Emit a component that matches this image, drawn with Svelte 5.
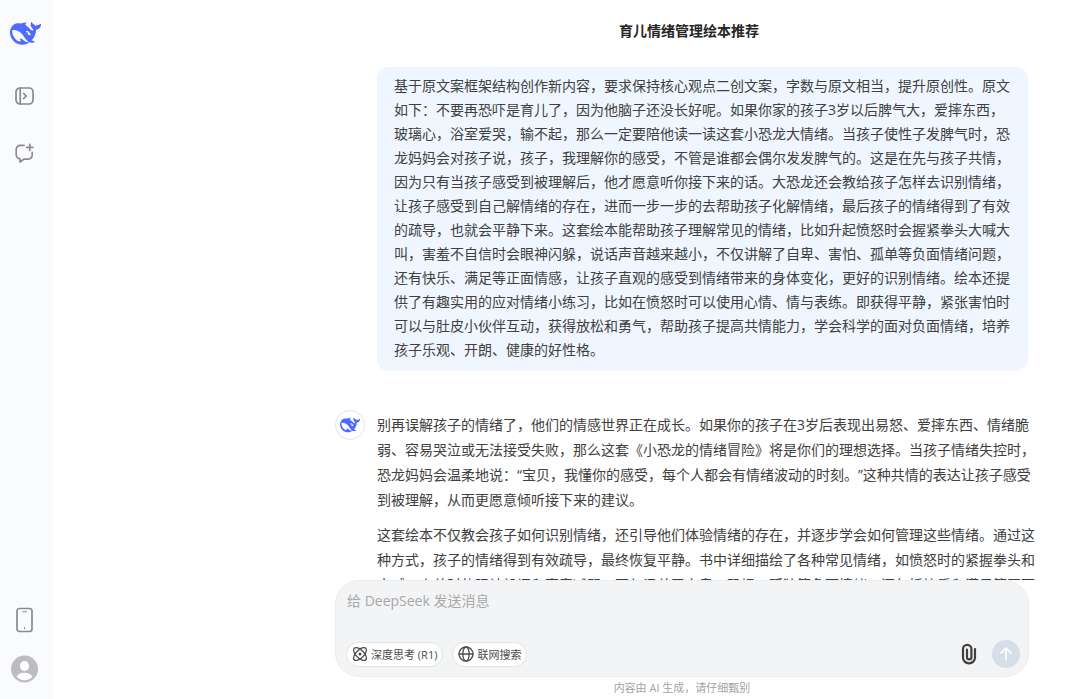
<script>
  const title = '育儿情绪管理绘本推荐';

  const question =
    '基于原文案框架结构创作新内容，要求保持核心观点二创文案，字数与原文相当，提升原创性。原文如下：不要再恐吓是育儿了，因为他脑子还没长好呢。如果你家的孩子3岁以后脾气大，爱摔东西，玻璃心，浴室爱哭，输不起，那么一定要陪他读一读这套小恐龙大情绪。当孩子使性子发脾气时，恐龙妈妈会对孩子说，孩子，我理解你的感受，不管是谁都会偶尔发发脾气的。这是在先与孩子共情，因为只有当孩子感受到被理解后，他才愿意听你接下来的话。大恐龙还会教给孩子怎样去识别情绪，让孩子感受到自己解情绪的存在，进而一步一步的去帮助孩子化解情绪，最后孩子的情绪得到了有效的疏导，也就会平静下来。这套绘本能帮助孩子理解常见的情绪，比如升起愤怒时会握紧拳头大喊大叫，害羞不自信时会眼神闪躲，说话声音越来越小，不仅讲解了自卑、害怕、孤单等负面情绪问题，还有快乐、满足等正面情感，让孩子直观的感受到情绪带来的身体变化，更好的识别情绪。绘本还提供了有趣实用的应对情绪小练习，比如在愤怒时可以使用心情、情与表练。即获得平静，紧张害怕时可以与肚皮小伙伴互动，获得放松和勇气，帮助孩子提高共情能力，学会科学的面对负面情绪，培养孩子乐观、开朗、健康的好性格。';

  const answer = [
    '别再误解孩子的情绪了，他们的情感世界正在成长。如果你的孩子在3岁后表现出易怒、爱摔东西、情绪脆弱、容易哭泣或无法接受失败，那么这套《小恐龙的情绪冒险》将是你们的理想选择。当孩子情绪失控时，恐龙妈妈会温柔地说：“宝贝，我懂你的感受，每个人都会有情绪波动的时刻。”这种共情的表达让孩子感受到被理解，从而更愿意倾听接下来的建议。',
    '这套绘本不仅教会孩子如何识别情绪，还引导他们体验情绪的存在，并逐步学会如何管理这些情绪。通过这种方式，孩子的情绪得到有效疏导，最终恢复平静。书中详细描绘了各种常见情绪，如愤怒时的紧握拳头和大喊、害羞时的眼神躲闪和声音减弱。不仅涵盖了自卑、恐惧、孤独等负面情绪，还包括快乐和满足等正面'
  ];

  let message = $state('');
  let deepThink = $state(false);
  let webSearch = $state(false);
</script>

{#snippet whale()}
  <svg class="whale" viewBox="0 0 24 24" aria-hidden="true">
    <path
      fill="currentColor"
      d="M23.748 4.482c-.254-.124-.364.113-.512.234-.051.039-.094.09-.137.136-.372.397-.806.657-1.373.626-.829-.046-1.537.214-2.163.848-.133-.782-.575-1.248-1.247-1.548-.352-.156-.708-.311-.955-.65-.172-.241-.219-.51-.305-.774-.055-.16-.11-.323-.293-.35-.2-.031-.278.136-.356.276-.313.572-.434 1.202-.422 1.84.027 1.436.633 2.58 1.838 3.393.137.093.172.187.129.323-.082.28-.18.552-.266.833-.055.179-.137.217-.329.14a5.526 5.526 0 01-1.736-1.18c-.857-.828-1.631-1.742-2.597-2.458a11.365 11.365 0 00-.689-.471c-.985-.957.13-1.743.388-1.836.27-.098.093-.432-.779-.428-.872.004-1.67.295-2.687.684a3.055 3.055 0 01-.465.137 9.597 9.597 0 00-2.883-.102c-1.885.21-3.39 1.102-4.497 2.623C.082 8.606-.231 10.684.152 12.85c.403 2.284 1.569 4.175 3.36 5.653 1.858 1.533 3.997 2.284 6.438 2.14 1.482-.085 3.133-.284 4.994-1.86.47.234.962.327 1.78.397.63.059 1.236-.03 1.705-.128.735-.156.684-.837.419-.961-2.155-1.004-1.682-.595-2.113-.926 1.096-1.296 2.746-2.642 3.392-7.003.05-.347.007-.565 0-.845-.004-.17.035-.237.23-.256a4.173 4.173 0 001.545-.475c1.396-.763 1.96-2.015 2.093-3.517.02-.23-.004-.467-.247-.588zM11.581 18c-2.089-1.642-3.102-2.183-3.52-2.16-.392.024-.321.471-.235.763.09.288.207.486.371.739.114.167.192.416-.113.603-.673.416-1.842-.14-1.897-.167-1.361-.802-2.5-1.86-3.301-3.307-.774-1.393-1.224-2.887-1.298-4.482-.02-.386.093-.522.477-.592a4.696 4.696 0 011.529-.039c2.132.312 3.946 1.265 5.468 2.774.868.86 1.525 1.887 2.202 2.891.72 1.066 1.494 2.082 2.48 2.914.348.292.625.514.891.677-.802.09-2.14.11-3.054-.614zm1-6.44a.306.306 0 01.415-.287.302.302 0 01.2.288.306.306 0 01-.31.307.303.303 0 01-.304-.308zm3.11 1.596c-.2.081-.399.151-.59.16a1.245 1.245 0 01-.798-.254c-.274-.23-.47-.358-.552-.758a1.73 1.73 0 01.016-.588c.07-.327-.008-.537-.239-.727-.187-.156-.426-.199-.688-.199a.559.559 0 01-.254-.078c-.11-.054-.2-.19-.114-.358.028-.054.16-.186.192-.21.356-.202.767-.136 1.146.016.352.144.618.408 1.001.782.391.451.462.576.685.914.176.265.336.537.445.848.067.195-.019.354-.25.452z"
    />
  </svg>
{/snippet}

<div class="app">
  <nav class="sidebar">
    <a class="logo" href="#home" aria-label="DeepSeek">{@render whale()}</a>

    <button class="nav-btn" aria-label="打开边栏">
      <svg width="20" height="20" viewBox="0 0 20 20">
        <rect x="1" y="2" width="17" height="16" rx="4" />
        <path d="M5.2 2v16M8.6 7.4l2.600 2.600L8.600 12.600" />
      </svg>
    </button>

    <button class="nav-btn" aria-label="开启新对话">
      <svg width="20" height="20" viewBox="0 0 20 20">
        <path d="M9 2.400H5.200A4 4 0 0 0 1.200 6.400v5.400A4 4 0 0 0 5 15.800V19L8.800 16.200h4.200A4.200 4.200 0 0 0 17.200 12V9.400" />
        <path d="M14.800 1.400v6M11.800 4.400h6" />
      </svg>
    </button>

    <div class="sidebar-bottom">
      <button class="nav-btn" aria-label="下载 App">
        <svg width="18" height="26" viewBox="0 0 18 26">
          <rect x="1" y="1.500" width="15" height="23" rx="2.500" />
          <path class="thin" d="M6.800 4.800h3.600M8.500 20.500v1.200" />
        </svg>
      </button>
      <button class="nav-btn" aria-label="个人信息">
        <svg class="user" width="28" height="28" viewBox="0 0 28 28">
          <circle cx="13.500" cy="14" r="13.500" fill="#bcbcc2" />
          <ellipse cx="13.500" cy="11" rx="4.600" ry="5" fill="#fff" />
          <path d="M5.700 22c1-3 4-4.200 7.800-4.200s6.800 1.200 7.800 4.200c-2 2-4.600 3.200-7.800 3.200S7.700 24 5.700 22z" fill="#fff" />
        </svg>
      </button>
    </div>
  </nav>

  <main>
    <header>
      <h1>{title}</h1>
    </header>

    <section class="messages">
      <div class="question">{question}</div>

      <article class="answer">
        <div class="avatar">{@render whale()}</div>
        <div class="answer-text">
          {#each answer as paragraph}
            <p>{paragraph}</p>
          {/each}
        </div>
      </article>
    </section>

    <form class="composer" onsubmit={(e) => e.preventDefault()}>
      <textarea bind:value={message} aria-label="消息" placeholder="给 DeepSeek 发送消息"></textarea>

      <div class="tools">
        <button type="button" class="pill" aria-pressed={deepThink} onclick={() => (deepThink = !deepThink)}>
          <svg width="16" height="16" viewBox="0 0 16 16">
            <ellipse cx="8" cy="8" rx="8.200" ry="4" transform="rotate(45 8 8)" />
            <ellipse cx="8" cy="8" rx="8.200" ry="4" transform="rotate(-45 8 8)" />
            <circle class="dot" cx="8" cy="8" r="1.500" />
          </svg>
          深度思考 (R1)
        </button>
        <button type="button" class="pill" aria-pressed={webSearch} onclick={() => (webSearch = !webSearch)}>
          <svg width="16" height="16" viewBox="0 0 16 16">
            <circle cx="8" cy="8" r="7" />
            <ellipse cx="8" cy="8" rx="3.200" ry="7" />
            <path d="M1 8h14" />
          </svg>
          联网搜索
        </button>

        <div class="actions">
          <button type="button" class="attach" aria-label="上传附件">
            <svg width="16" height="22" viewBox="0 0 16 22">
              <path d="M14 6v8.400a6 6 0 0 1-12 0V6a4.200 4.200 0 0 1 8.400 0v8.200a2.200 2.200 0 0 1-4.400 0V6.600" />
            </svg>
          </button>
          <button type="submit" class="send" aria-label="发送">
            <svg width="16" height="16" viewBox="0 0 16 16">
              <path d="M8 14V2.200M2.800 7.200 8 2l5.200 5.200" />
            </svg>
          </button>
        </div>
      </div>
    </form>

    <footer>内容由 AI 生成，请仔细甄别</footer>
  </main>
</div>

<style>
  :global(body) {
    margin: 0;
    background: #fff;
  }

  .app {
    display: flex;
    height: 100vh;
    overflow: hidden;
    color: #404040;
    font-family: 'Open Sans', 'Noto Sans CJK SC', sans-serif;
    font-size: 14px;
    text-spacing-trim: space-all;
  }

  button {
    display: flex;
    align-items: center;
    justify-content: center;
    margin: 0;
    padding: 0;
    border: none;
    background: none;
    font: inherit;
    color: inherit;
    cursor: pointer;
  }

  svg {
    display: block;
    flex: none;
    fill: none;
    stroke: currentColor;
    stroke-linecap: round;
    stroke-linejoin: round;
  }

  .whale {
    width: 100%;
    height: 100%;
    stroke: none;
  }

  .sidebar {
    flex: none;
    display: flex;
    flex-direction: column;
    align-items: center;
    box-sizing: border-box;
    width: 53px;
    padding: 18px 3px 16px 0;
    background: #f9fbff;
  }

  .logo {
    width: 31px;
    height: 31px;
    margin-bottom: 33px;
    color: #4d6bfe;
  }

  .nav-btn {
    width: 28px;
    height: 28px;
    margin-bottom: 29px;
    color: #8b8b8b;
  }

  .nav-btn svg {
    stroke-width: 1.7;
  }

  .nav-btn .thin {
    stroke-width: 1;
  }

  .nav-btn .user {
    stroke: none;
  }

  .sidebar-bottom {
    display: flex;
    flex-direction: column;
    gap: 21px;
    margin-top: auto;
  }

  .sidebar-bottom .nav-btn {
    margin: 0;
  }

  main {
    flex: 1;
    min-width: 0;
    display: flex;
    flex-direction: column;
    padding: 0 43px 0 282px;
  }

  header {
    flex: none;
    display: flex;
    align-items: center;
    justify-content: center;
    height: 62px;
    margin-bottom: 5px;
    padding-left: 6px;
  }

  h1 {
    margin: 0;
    color: #262626;
    font-size: 14px;
    font-weight: 700;
    line-height: 24px;
  }

  .messages {
    flex: 1;
    min-height: 0;
    overflow: hidden;
  }

  .question {
    margin: 0 9px 0 42px;
    padding: 7px 17px 9px;
    border-radius: 12px;
    background: #eff6ff;
    line-height: 24px;
  }

  .answer {
    display: flex;
    gap: 12px;
    margin-top: 39px;
  }

  .avatar {
    flex: none;
    box-sizing: border-box;
    width: 30px;
    height: 30px;
    padding: 4px;
    border: 1px solid #d5e4ff;
    border-radius: 50%;
    color: #4d6bfe;
  }

  .answer-text {
    flex: 1;
    min-width: 0;
    padding-top: 2px;
    line-height: 25px;
  }

  .answer-text p {
    margin: 0 0 10px;
  }

  .composer {
    flex: none;
    display: flex;
    flex-direction: column;
    box-sizing: border-box;
    height: 97px;
    margin-right: 8px;
    padding: 9px 8px 8px 10px;
    border: 1px solid #ebecef;
    border-radius: 24px;
    background: #f3f4f6;
  }

  textarea {
    flex: 1;
    min-height: 0;
    padding: 0 1px;
    border: none;
    outline: none;
    background: none;
    resize: none;
    color: inherit;
    font: inherit;
    line-height: 22px;
  }

  textarea::placeholder {
    color: #a8a8a8;
    opacity: 1;
  }

  .tools {
    display: flex;
    align-items: center;
    gap: 9px;
  }

  .pill {
    gap: 3px;
    box-sizing: border-box;
    height: 25px;
    padding: 0 5px;
    border: 1px solid #e2e3e6;
    border-radius: 13px;
    background: #fff;
    color: #4c4c4c;
    font-size: 11px;
    white-space: nowrap;
  }

  .pill svg {
    stroke-width: 1.3;
  }

  .pill .dot {
    fill: currentColor;
    stroke: none;
  }

  .actions {
    display: flex;
    align-items: center;
    gap: 15px;
    margin-left: auto;
  }

  .attach svg {
    stroke-width: 2.2;
  }

  .send {
    width: 28px;
    height: 28px;
    border-radius: 50%;
    background: #d6dee8;
    color: #fff;
  }

  .send svg {
    stroke-width: 1.6;
  }

  footer {
    flex: none;
    height: 22px;
    margin-right: 8px;
    color: #a3a3a3;
    font-size: 11px;
    line-height: 22px;
    text-align: center;
  }
</style>
